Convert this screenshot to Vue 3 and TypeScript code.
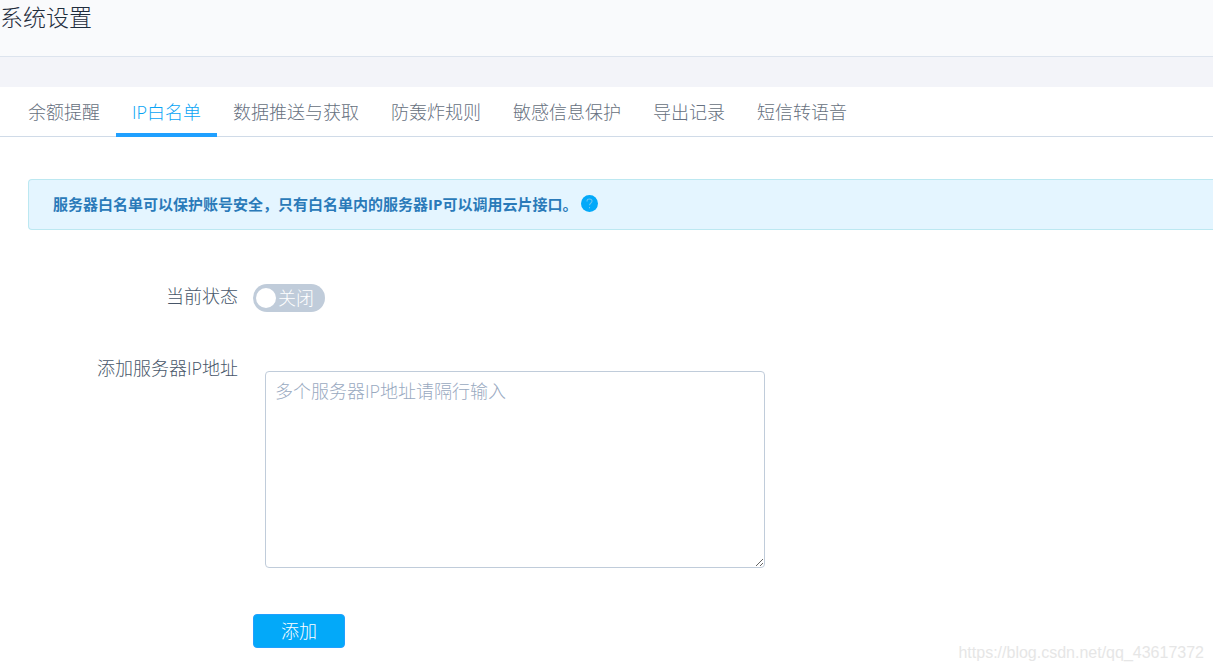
<script setup lang="ts">
import { ref } from 'vue'

interface Tab {
  id: string
  label: string
}

const tabs: Tab[] = [
  { id: 'balance', label: '余额提醒' },
  { id: 'whitelist', label: 'IP白名单' },
  { id: 'push', label: '数据推送与获取' },
  { id: 'bomb', label: '防轰炸规则' },
  { id: 'sensitive', label: '敏感信息保护' },
  { id: 'export', label: '导出记录' },
  { id: 'voice', label: '短信转语音' },
]

const activeTab = ref('whitelist')
const enabled = ref(false)
const addresses = ref('')
</script>

<template>
  <div class="page">
    <header class="page-header">
      <h1>系统设置</h1>
    </header>
    <main class="panel">
      <nav class="tabs" role="tablist">
        <button
          v-for="tab in tabs"
          :key="tab.id"
          type="button"
          role="tab"
          class="tab"
          :class="{ active: tab.id === activeTab }"
          :aria-selected="tab.id === activeTab"
          @click="activeTab = tab.id"
        >{{ tab.label }}</button>
      </nav>

      <div class="notice">
        <strong>服务器白名单可以保护账号安全，只有白名单内的服务器IP可以调用云片接口。</strong>
        <svg class="help" viewBox="0 0 16 16" aria-hidden="true">
          <circle cx="8" cy="8" r="8" />
          <path d="M5.700 6V5.500C5.700 4.500 6.700 3.700 8 3.700s2.400.8 2.400 2c0 1.800-2.400 2-2.400 4M8 11.200v1.200" />
        </svg>
      </div>

      <form class="form" @submit.prevent>
        <div class="row status-row">
          <label class="label" for="status">当前状态</label>
          <span class="switch" :class="{ on: enabled }">
            <input id="status" v-model="enabled" type="checkbox" role="switch" />
            <span class="knob"></span>
            <span class="switch-text">{{ enabled ? '开启' : '关闭' }}</span>
          </span>
        </div>
        <div class="row address-row">
          <label class="label" for="addresses">添加服务器IP地址</label>
          <textarea id="addresses" v-model="addresses" placeholder="多个服务器IP地址请隔行输入"></textarea>
        </div>
        <button class="submit" type="submit">添加</button>
      </form>
    </main>
    <div class="watermark">https://blog.csdn.net/qq_43617372</div>
  </div>
</template>

<style>
body {
  margin: 0;
  background: #fff;
}
</style>

<style scoped>
.page {
  position: relative;
  box-sizing: border-box;
  min-height: 100vh;
  overflow: hidden;
  background: #fff;
  color: #475669;
  font: 300 18px/24px "Open Sans", "Noto Sans CJK SC", sans-serif;
}

button,
textarea {
  font: inherit;
}

.page-header {
  box-sizing: border-box;
  height: 57px;
  padding-top: 3px;
  border-bottom: 1px solid #dde4ee;
  background: #f9fafc;
}

h1 {
  margin: 0;
  color: #1f2d3d;
  font-size: 23px;
  font-weight: 300;
  line-height: 28px;
}

.panel {
  border-top: 30px solid #f3f4f9;
}

.tabs {
  display: flex;
  height: 49px;
  padding-left: 12px;
  border-bottom: 1px solid #d0dbe8;
}

.tab {
  height: 50px;
  padding: 4px 16px 0;
  border: 0;
  border-bottom: 4px solid transparent;
  background: none;
  color: #667080;
  white-space: nowrap;
  cursor: pointer;
}

.tab.active {
  border-bottom-color: #20a0ff;
  color: #08a4f5;
}

.notice {
  box-sizing: border-box;
  display: flex;
  align-items: center;
  gap: 4px;
  margin: 42px 0 0 28px;
  height: 51px;
  padding: 0 0 2px 24px;
  border: 1px solid #bce8f1;
  border-right: 0;
  border-radius: 4px 0 0 4px;
  background: #e4f5ff;
  color: #2a7ab9;
  font-size: 15px;
}

.notice strong {
  font-weight: 700;
}

.help {
  width: 17px;
  height: 17px;
}

.help circle {
  fill: #03a9f9;
}

.help path {
  fill: none;
  stroke: #6cc4f0;
  stroke-width: 1;
}

.form {
  padding-top: 54px;
}

.row {
  display: flex;
  align-items: flex-start;
}

.label {
  flex: none;
  width: 238px;
  text-align: right;
}

.switch {
  position: relative;
  display: flex;
  align-items: center;
  gap: 2px;
  box-sizing: border-box;
  width: 72px;
  height: 28px;
  margin-left: 15px;
  padding-left: 3px;
  border-radius: 14px;
  background: #c0ccda;
  color: #fff;
}

.switch.on {
  background: #20a0ff;
}

.switch input {
  position: absolute;
  inset: 0;
  width: 100%;
  height: 100%;
  margin: 0;
  opacity: 0;
  cursor: pointer;
}

.knob {
  width: 20px;
  height: 20px;
  border-radius: 50%;
  background: #fff;
}

.address-row {
  margin-top: 44px;
}

textarea {
  box-sizing: border-box;
  width: 500px;
  height: 197px;
  margin: 15px 0 0 27px;
  padding: 7px 9px;
  border: 1px solid #c0ccda;
  border-radius: 4px;
  background: #fff;
  color: #1f2d3d;
}

textarea::placeholder {
  color: #99a9bf;
}

.submit {
  width: 92px;
  height: 34px;
  margin: 46px 0 0 253px;
  padding: 0;
  border: 1px solid #20a0ff;
  border-radius: 4px;
  background: #03a9f9;
  color: #fff;
  cursor: pointer;
}

.watermark {
  position: absolute;
  right: 9px;
  bottom: 8px;
  color: #e6e6e6;
  font: 400 16px/20px "Liberation Sans", Arial, sans-serif;
}
</style>
